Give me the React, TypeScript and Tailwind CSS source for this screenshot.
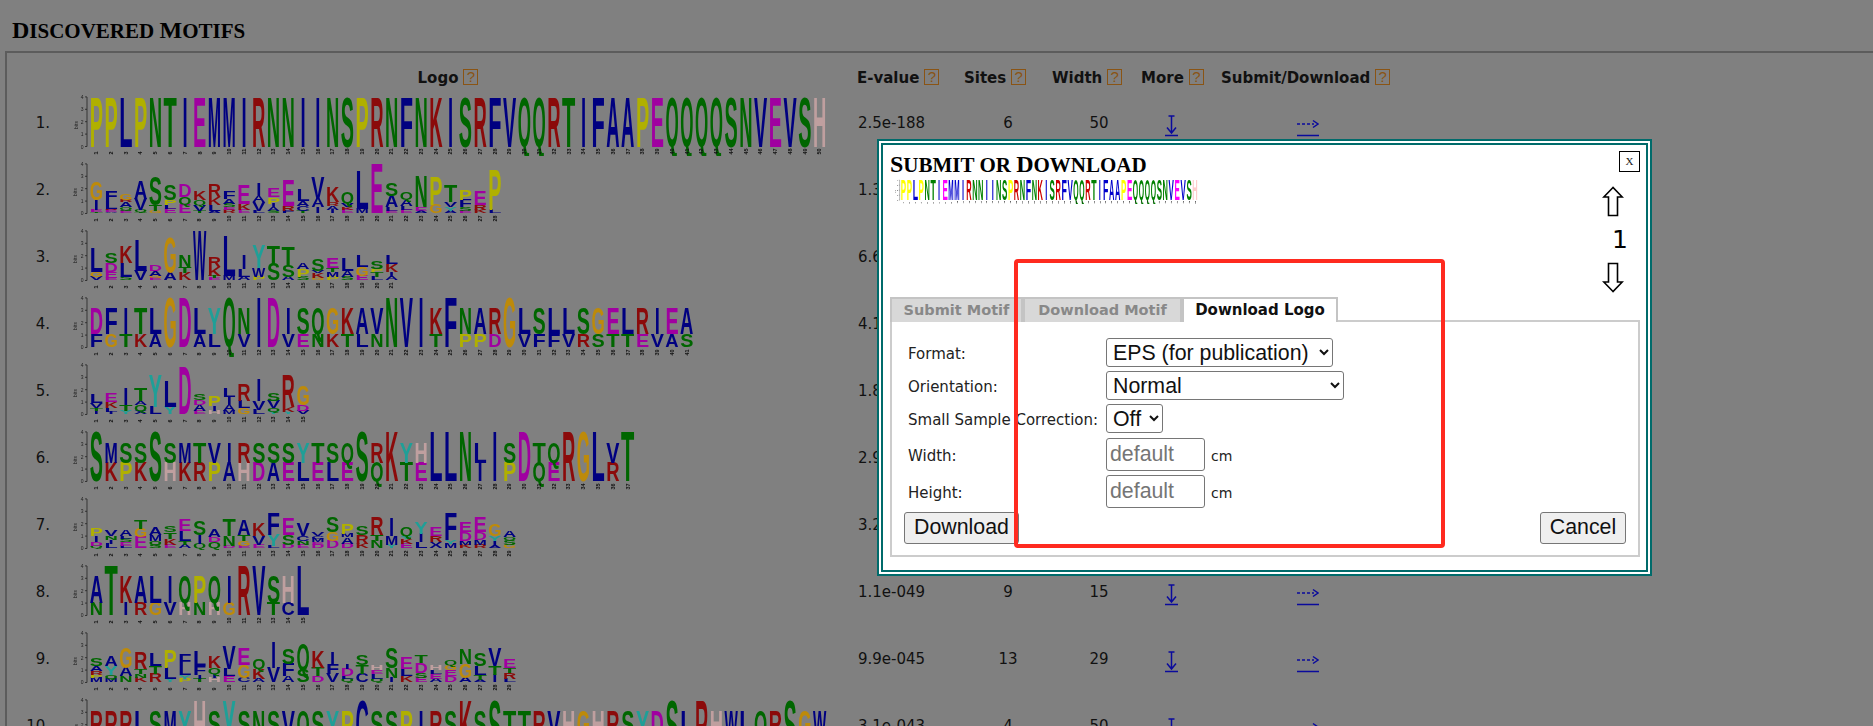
const COL = 14.76;
const BIT = 12.4;
const BASE = 52.5;

const dim: Record<string, string> = {
  A: "#000080", C: "#000080", F: "#000080", I: "#000080", L: "#000080", M: "#000080", V: "#000080", W: "#000080",
  N: "#006600", Q: "#006600", S: "#006600", T: "#006600",
  D: "#a000a0", E: "#a000a0",
  K: "#8b0a0a", R: "#8b0a0a",
  H: "#bf9f9f", G: "#bd8a0a", P: "#b0b000", Y: "#1f9f97", X: "#000080",
};

const bright: Record<string, string> = {
  A: "#0000cc", C: "#0000cc", F: "#0000cc", I: "#0000cc", L: "#0000cc", M: "#0000cc", V: "#0000cc", W: "#0000cc",
  N: "#008000", Q: "#008000", S: "#008000", T: "#008000",
  D: "#ff00ff", E: "#ff00ff",
  K: "#cc0000", R: "#cc0000",
  H: "#ffcccc", G: "#ffb300", P: "#ffff00", Y: "#33cccc", X: "#0000cc",
};

const advance: Record<string, number> = {
  A: 72, B: 72, C: 72, D: 72, E: 67, F: 61, G: 78, H: 72, I: 72, K: 72, L: 61, M: 83,
  N: 72, P: 67, Q: 78, R: 72, S: 67, T: 61, U: 72, V: 67, W: 94, X: 67, Y: 67,
};

// two-letter columns: the lower letter has a fixed height, "-" means the top letter fills the column
function pair(top: string, bottom: string, low: number, total = 3.1) {
  return top.split("").map((t, i) => {
    const b = bottom[i];
    return b === "-" ? `${t}3.95` : `${b}${low}${t}${(total - low).toFixed(2)}`;
  });
}

const stacks = (s: string) => s.split(" ");

const row1 = "PPLPNTIEMMIRNNIINSPRNFNKISRFVQQRTIFAAPEQQQQSNVEVSH".split("").map((c) => `${c}3.95`);

const rows = [
  { evalue: "2.5e-188", sites: 6, cols: row1 },
  {
    evalue: "1.3e-111", sites: 11,
    cols: stacks("T.1E.2I.8G1.4 A.1E.2R.1L.6F.8 E.2S.1Q.2A.4R.2G.5 T.1Q.2V.9A1.4 G.2T.5S2.3 E.4L.3P.4S1.2 E.7Q.6D1 T.2V.5Q.4K.7 A.2L.5K.6R1 R.3E.2S.3A.4F.6 E.3K.5E1.5 L.2V.7A.5I1 S.2A.3I.3P.5E.7 F.2R.4E2 T.2C.4A.4L.9 I.5A.7V1.7 I.3A.3R.3K1.2 E.3K.2V.3Q.9 M.4L3.1 E3.9 E.2L.3A.9S1 E.3L.3A.5Q.6 A.2E.3N2.5 G.7P2.3 A.2Y.3V.4T1.3 E.2S.3F.6P.8 K.3R.4E1.1 L.3P3.2"),
  },
  {
    evalue: "6.6e-098", sites: 8,
    cols: stacks("V.3G.4L1.9 E.2E.5D.7S.8 S.3L1.1K1.3 V.8L2.5 E.2G.2A.4D.5 A.6G2.8 K.6T.5N.9 W3.9 E.2T.2K.7R.8 M.4L3.2 A.3L.6I1.1 P.3W.7Y1.8 S1.3T1.4 A.3S.9T1.5 S.3P.6A.5 G.2K.4V.2S.9 P.3M.4T.3E.8 S.3A.5L1 E.4G.7L.9 L.3T.4P.2S.6 A.3I.4K.6L.7"),
  },
  {
    evalue: "4.1e-091", sites: 5,
    cols: pair("DFITLGDLYQNIDISQGKAVNVIKFNARGLSLLSGELRIEA", "FGTKA--AL-V--VENKTLN---T-PPD-VFFVRSTTEVAS", 1.05),
  },
  {
    evalue: "1.8e-078", sites: 9,
    cols: stacks("I.3T.2V.4L.7 I.2L.3K.5E.7 Y.3T.5I1.3 X.3Q.5A.3T1 L.6Y2.6 Y.6L2 D3.8 E.3A.5D.4S.5 H.3I.4P.8 M.3A.5I.6L.7 G.5L.6R1.3 L.4V.7I1.7 Y.2Q.3V.6S.6 Y.2K.4R2.6 V.3D.5G1.5"),
  },
  {
    evalue: "2.9e-066", sites: 4,
    cols: pair("SMSSSSMTVIRSSSYTSQSRKYHLLNLISDTQRGLVT", "-KPK-HKRPAHDAELELE-Q-TE---I-P-QE---R-", 1.5),
  },
  {
    evalue: "3.2e-052", sites: 12,
    cols: stacks("Q.2D.3I.5P.6 L.4I.3N.3V.5 L.2E.3S.3L.2A.5 E.9G.7T.7 S.3Q.3M.5A.6 E.3K.5T.5S.5 A.3T.3L.8E.9 Q.4I.7S1.1 Q.5D.4A.6 D.2N.8T1.3 E.2G.4T.5A1.2 E.3V.7K1 L.2Y.9F1.7 D.3S.8E1.3 E.3N.3C.4V1 D.3E.2M.3C.2V.3 D.6G.7S1.2 D.4A.5M.3P.8 K.4R.7S.7 N.6T.5R1.4 Y.3M.7I1.4 E.4K.4Y.2Q.7 L.5I.7Y.9 X.5R.5E.7 M.4Y.3F2.2 K.3M.3D.7E.8 R.3M.4D.6E1.2 A.2I.4Y.4G.9 G.3S.4Q.2A.5"),
  },
  {
    evalue: "1.1e-049", sites: 9,
    cols: pair("ATKALIQPQIRVSHL", "N-IRGVHNHG--TC-", 1, 3.2),
  },
  {
    evalue: "9.9e-045", sites: 13,
    cols: stacks("M.4P.2R.3A.4S.6 M.3Q.3Y.7A.8 N.5A.7G1.6 K.4N.3T.4R1.3 R.7T.6L1 Y.3L.9P1.4 P.3Y.3L.7F.9 T.3I.3F.7L1.2 H.4I.3Q.5K.9 E.5L.6V1.8 C.4G1E1.3 A.3K.8Q.8 V1.2I2 A.5F1S1.2 S1Q2.1 D.5T.7K1.3 V.7F.8I.9 Q.3L.2D.6I.4 C.7T.7S.8 Q.3L.4E.3H.4 I.4N.8S1.6 K.5L.6E.9 E.4S.4D.8T.6 A.3E.4L.3H.4 D.5E.5G.4Q.4 A.4G1.1N1.2 A.2T.4L.7S1 I.6T.7V1.4 L.3R.5T.4E.7"),
  },
  {
    evalue: "3.1e-043", sites: 4,
    cols: pair("RRRLSMYHSYSNSVQSYPCSSPIRSKSSTTRVHGHRSYDSLRHWLQRSGW", "RRRLSMY-S-SNSVQSYP-SSPIRS-S-TTRVHGHRSYD-L-HWLQR-GW", 1),
  },
];

function parseColumn(c: string) {
  return [...c.matchAll(/([A-Z])([\d.]+)/g)].map((m) => ({ letter: m[1], bits: parseFloat(m[2]) }));
}

function Logo({ cols, palette, width, height }: { cols: string[]; palette: Record<string, string>; width: number; height: number }) {
  const w = 16 + cols.length * COL;
  return (
    <svg width={width} height={height} viewBox={`0 0 ${w} 62`} className="block blur-[0.3px]" fontFamily="'Liberation Sans', sans-serif">
      <path d={`M14 3V${BASE}M12 ${BASE}H14M12 ${BASE - BIT}H14M12 ${BASE - 2 * BIT}H14M12 ${BASE - 3 * BIT}H14M12 ${BASE - 4 * BIT}H14`} stroke="#222" strokeWidth="0.8" fill="none" />
      {[0, 1, 2, 3, 4].map((n) => (
        <text key={n} x="10.5" y={BASE - n * BIT + 2} fontSize="5" textAnchor="end" fill="#222">{n}</text>
      ))}
      <text transform="translate(4.5 31) rotate(-90)" fontSize="5" textAnchor="middle" fill="#222">bits</text>
      {cols.map((col, i) => {
        let y = BASE;
        const cx = 16 + i * COL + COL / 2;
        return (
          <g key={i}>
            {parseColumn(col).map((item, j) => {
              const sy = (item.bits * BIT) / 68.8;
              const sx = (COL - 1.5) / advance[item.letter];
              const node = (
                <text
                  key={j}
                  transform={`translate(${cx} ${y}) scale(${sx} ${sy})`}
                  fontSize="100"
                  fontWeight="700"
                  textAnchor="middle"
                  fill={palette[item.letter]}
                >
                  {item.letter}
                </text>
              );
              y -= item.bits * BIT;
              return node;
            })}
            <text transform={`translate(${cx + 1.8} 60.5) rotate(-90)`} fontSize="5.5" fontWeight="700" fill="#111">{i + 1}</text>
          </g>
        );
      })}
    </svg>
  );
}

// capitals stay large, the rest is set as smaller capitals
function SmallCaps({ text }: { text: string }) {
  return (
    <>
      {text.split(/([A-Z])/).map((part, i) =>
        i % 2 ? <span key={i}>{part}</span> : <span key={i} className="text-[21px] uppercase">{part}</span>
      )}
    </>
  );
}

function Help() {
  return (
    <span className="ml-[5px] inline-flex h-[16px] w-[15px] items-center justify-center border border-[#8a5414] align-[1px] font-['Liberation_Sans',sans-serif] text-[15px] font-normal leading-none text-[#8a5414]">
      ?
    </span>
  );
}

function MoreIcon() {
  return (
    <svg width="13" height="22" viewBox="0 0 13 22" className="block">
      <path d="M3.5 1H9.5M6.5 1V17M2 12.5L6.5 18L11 12.5" stroke="#0a0a9c" strokeWidth="1.5" fill="none" />
      <path d="M0 20.5H13" stroke="#0a0a9c" strokeWidth="1.5" />
    </svg>
  );
}

function SubmitIcon() {
  return (
    <svg width="22" height="22" viewBox="0 0 22 22" className="block">
      <path d="M0 9H17" stroke="#0a0a9c" strokeWidth="1.5" strokeDasharray="3 2" />
      <path d="M16 5.5L21 9L16 12.5" stroke="#0a0a9c" strokeWidth="1.5" fill="none" />
      <path d="M0 20.5H22" stroke="#0a0a9c" strokeWidth="1.5" />
    </svg>
  );
}

function MotifTable() {
  const th = "pt-[15px] text-left align-top font-bold leading-[20px]";
  return (
    <table className="table-fixed border-collapse text-[15px] text-[#111]">
      <colgroup>
        <col className="w-[48px]" />
        <col className="w-[802px]" />
        <col className="w-[107px]" />
        <col className="w-[88px]" />
        <col className="w-[89px]" />
        <col className="w-[80px]" />
        <col className="w-[260px]" />
      </colgroup>
      <thead>
        <tr className="h-[41px]">
          <th />
          <th className="pr-[16px] pt-[15px] text-center align-top font-bold leading-[20px]">Logo<Help /></th>
          <th className={th}>E-value<Help /></th>
          <th className={th}>Sites<Help /></th>
          <th className={th}>Width<Help /></th>
          <th className={th}>More<Help /></th>
          <th className={th}>Submit/Download<Help /></th>
        </tr>
      </thead>
      <tbody>
        {rows.map((row, i) => (
          <tr key={row.evalue} className="h-[67px]">
            <td className="pr-[5px] pt-[19px] text-right align-top leading-[20px]">{i + 1}.</td>
            <td className="pl-[18px] align-top">
              <Logo cols={row.cols} palette={dim} width={16 + row.cols.length * COL} height={62} />
            </td>
            <td className="pl-px pt-[19px] align-top leading-[20px]">{row.evalue}</td>
            <td className="pt-[19px] text-center align-top leading-[20px]">{row.sites}</td>
            <td className="pl-[5px] pt-[19px] text-center align-top leading-[20px]">{row.cols.length}</td>
            <td className="pl-[24px] pt-[21px] align-top"><a href="#more"><MoreIcon /></a></td>
            <td className="pl-[76px] pt-[21px] align-top"><a href="#submit"><SubmitIcon /></a></td>
          </tr>
        ))}
      </tbody>
    </table>
  );
}

function ArrowUp() {
  return (
    <svg width="22" height="31" viewBox="0 0 22 31" className="block">
      <path d="M11 1.5L1.8 11H6.5V29.5H15.5V11H20.2Z" fill="#fff" stroke="#000" strokeWidth="1.6" />
    </svg>
  );
}

function ArrowDown() {
  return (
    <svg width="22" height="31" viewBox="0 0 22 31" className="block">
      <path d="M11 29.5L1.8 20H6.5V1.5H15.5V20H20.2Z" fill="#fff" stroke="#000" strokeWidth="1.6" />
    </svg>
  );
}

function LogoForm() {
  const label = "h-[29px] pt-[1.5px] text-[15px] leading-[29px] text-[#222]";
  const control = "h-[29px] rounded-[3px] border border-[#767676] bg-white pl-[2px] font-['Liberation_Sans',sans-serif] text-[21.33px] leading-none text-[#111]";
  const input = "h-[33px] w-[99px] rounded-[3px] border border-[#767676] bg-white px-[3px] font-['Liberation_Sans',sans-serif] text-[21.33px] leading-none text-[#111] placeholder:text-[#757575]";
  return (
    <div className="flex h-[237px] flex-col border-2 border-[#cccccc] pt-[16px]">
      <div className="ml-[16px] grid grid-cols-[198px_1fr] gap-y-[4px]">
        <span className={label}>Format:</span>
        <select className={`${control} w-[227px]`} defaultValue="eps">
          <option value="eps">EPS (for publication)</option>
        </select>
        <span className={label}>Orientation:</span>
        <select className={`${control} w-[238px]`} defaultValue="normal">
          <option value="normal">Normal</option>
        </select>
        <span className={label}>Small Sample Correction:</span>
        <select className={`${control} w-[57px]`} defaultValue="off">
          <option value="off">Off</option>
        </select>
        <span className={`${label} mt-px self-center`}>Width:</span>
        <div className="mt-px flex items-center gap-[6px] text-[14px] text-[#222]">
          <input className={input} placeholder="default" />
          <span className="mt-[3px]">cm</span>
        </div>
        <span className={`${label} self-center`}>Height:</span>
        <div className="flex items-center gap-[6px] text-[14px] text-[#222]">
          <input className={input} placeholder="default" />
          <span className="mt-[3px]">cm</span>
        </div>
      </div>
      <div className="mt-[4px] flex justify-between px-[12px] font-['Liberation_Sans',sans-serif] text-[21.33px] leading-none text-[#111]">
        <button className="h-[32px] w-[115px] rounded-[3px] border border-[#767676] bg-[#efefef]">Download</button>
        <button className="h-[32px] w-[86px] rounded-[3px] border border-[#767676] bg-[#efefef]">Cancel</button>
      </div>
    </div>
  );
}

function SubmitDialog() {
  const tab = "flex h-[25px] items-center justify-center border-2 border-b-0 border-[#c4c4c4] font-bold";
  const idle = "bg-[#d8d8d8] text-[14.5px] text-[#888888]";
  return (
    <div className="absolute left-[877px] top-[139px] flex h-[437px] w-[775px] flex-col border-[6px] border-double border-[#006b6b] bg-white">
      <div className="flex h-[152px] justify-between pl-[7px] pr-[6px] pt-[5px]">
        <div>
          <h2 className="font-['Liberation_Serif',serif] text-[24px] font-bold leading-[28px] text-black">
            <SmallCaps text="Submit or Download" />
          </h2>
          <div className="ml-[3px]">
            <Logo cols={row1} palette={bright} width={306} height={25} />
          </div>
        </div>
        <div className="flex flex-col items-end">
          <button className="mt-px flex h-[21px] w-[21px] items-center justify-center border border-black font-['Liberation_Serif',serif] text-[11px] leading-none text-[#222]">
            X
          </button>
          <div className="mr-[16px] mt-[14px]"><ArrowUp /></div>
          <div className="mr-[12px] mt-[10px] text-[25px] leading-[26px] text-black">1</div>
          <div className="mr-[16px] mt-[9px]"><ArrowDown /></div>
        </div>
      </div>
      <div className="px-[7px] pr-[6px]">
        <div className="relative z-10 -mb-[2px] flex">
          <div className={`${tab} ${idle} w-[133px]`}>Submit Motif</div>
          <div className={`${tab} ${idle} w-[159px]`}>Download Motif</div>
          <div className={`${tab} w-[156px] bg-white text-[15px] text-[#111]`}>Download Logo</div>
        </div>
        <LogoForm />
      </div>
    </div>
  );
}

export default function App() {
  return (
    <div className="relative h-screen overflow-hidden bg-[#808080] font-['DejaVu_Sans',sans-serif]">
      <h1 className="ml-[12px] pt-[16px] font-['Liberation_Serif',serif] text-[24px] font-bold leading-[28px] text-black">
        <SmallCaps text="Discovered Motifs" />
      </h1>
      <div className="ml-[5px] mt-[6px] border-l-2 border-t-2 border-[#5c5c5c]">
        <MotifTable />
      </div>
      <SubmitDialog />
      {/* annotation drawn over the dialog */}
      <div className="pointer-events-none absolute left-[1014px] top-[259px] z-20 h-[289px] w-[431px] rounded-[4px] border-[4px] border-[#ff2a1f]" />
    </div>
  );
}
